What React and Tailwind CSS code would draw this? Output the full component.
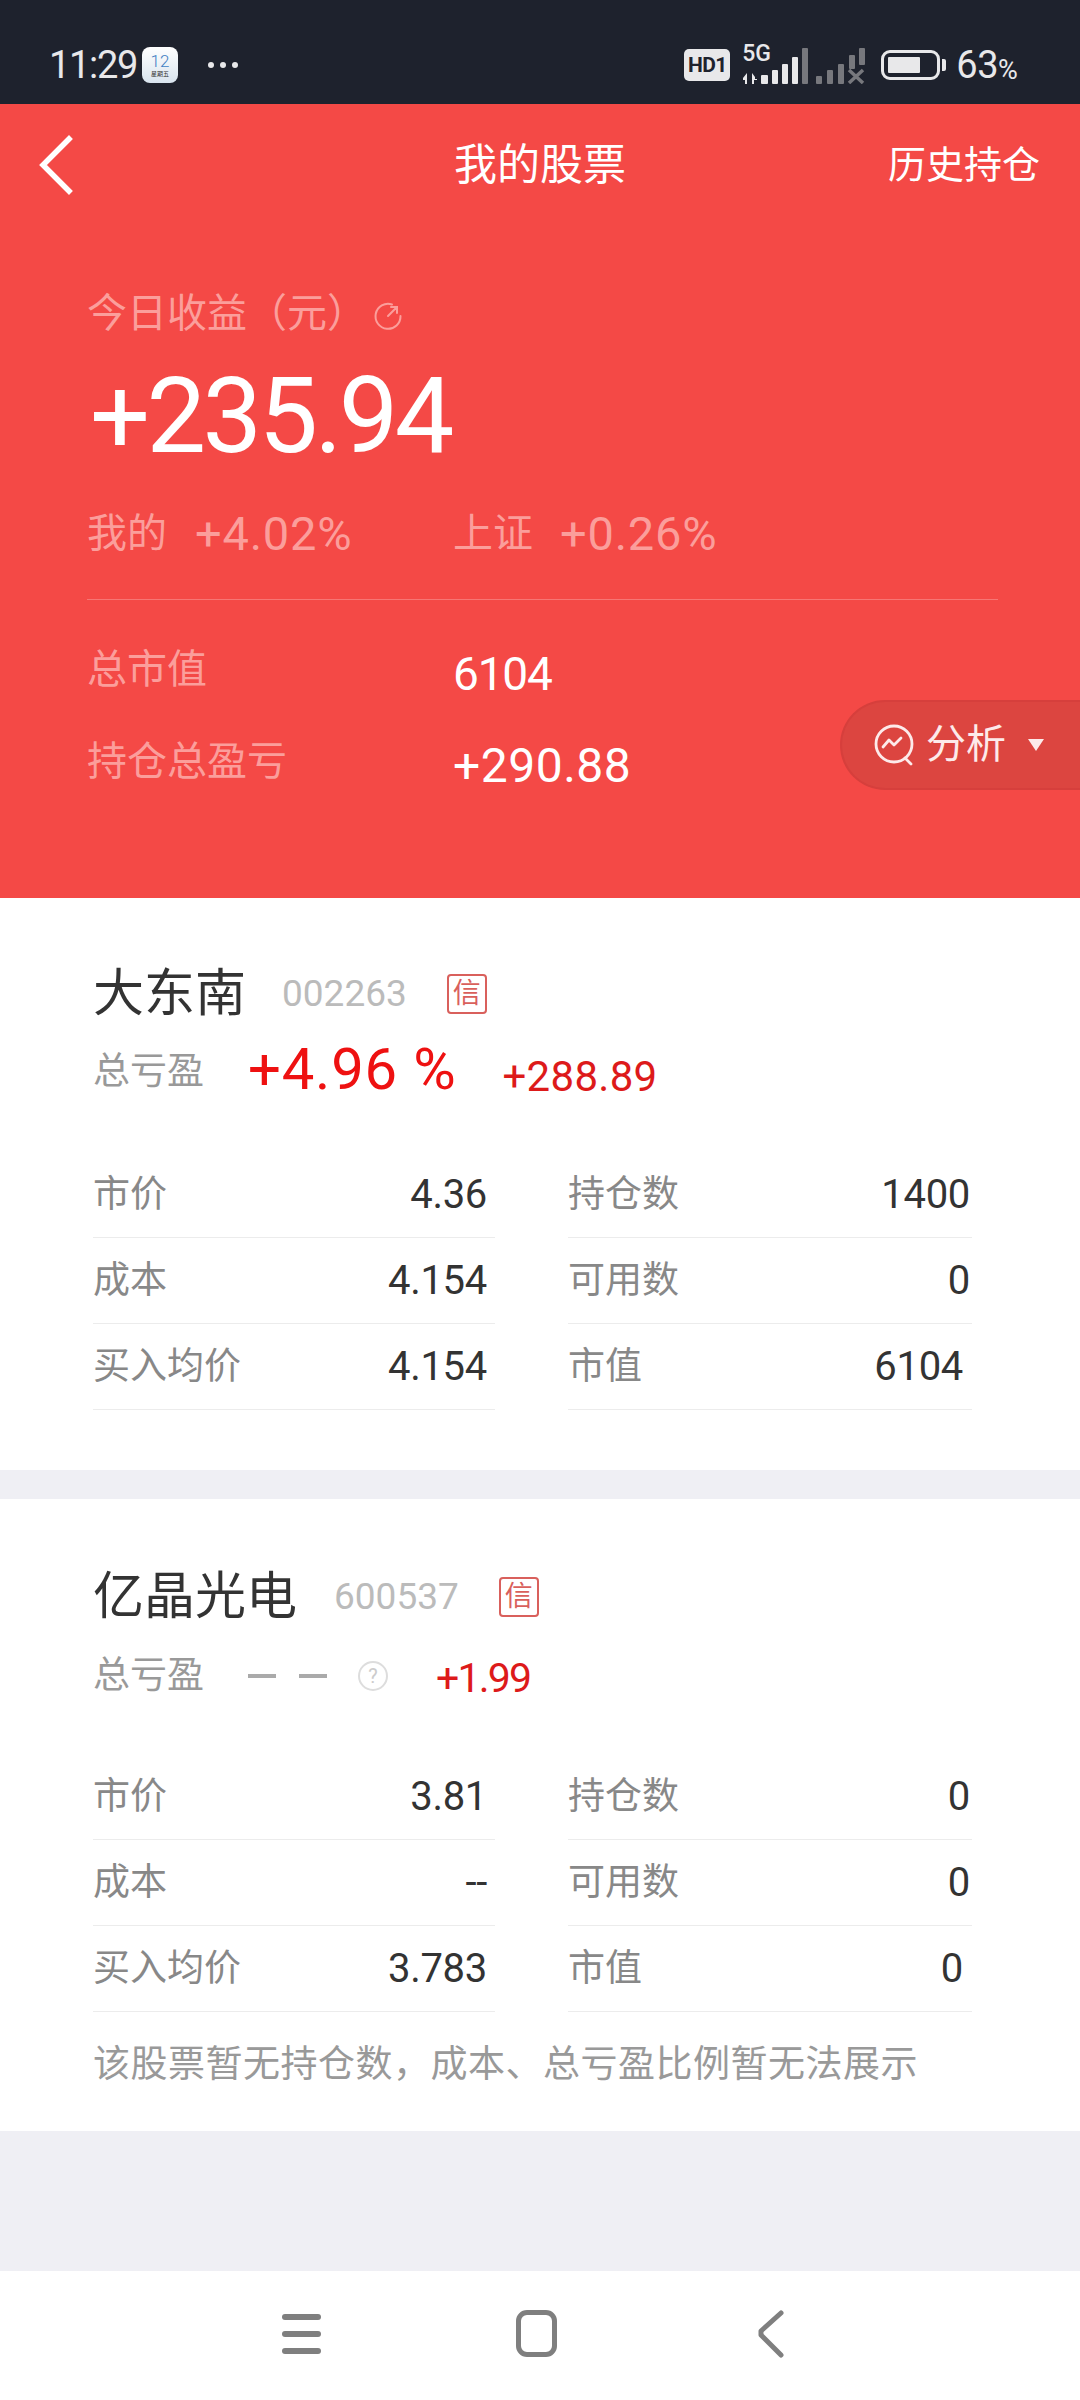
const fontStack = 'font-["Roboto","Noto_Sans_CJK_SC",sans-serif]';

const stocks = [
  {
    name: '大东南',
    code: '002263',
    rows: [
      ['市价', '4.36', '持仓数', '1400'],
      ['成本', '4.154', '可用数', '0'],
      ['买入均价', '4.154', '市值', '6104'],
    ],
  },
  {
    name: '亿晶光电',
    code: '600537',
    rows: [
      ['市价', '3.81', '持仓数', '0'],
      ['成本', '--', '可用数', '0'],
      ['买入均价', '3.783', '市值', '0'],
    ],
  },
];

function SignalBars() {
  return (
    <svg width="124" height="36" viewBox="0 0 124 36" className="shrink-0">
      <g fill="#e8e8ea">
        <path d="M1 30l4-5v11H3v-4H1zM10 36V25l3 4v2h2v1h-3v4z" />
        <rect x="19" y="27" width="7" height="9" rx="1" />
        <rect x="30" y="22" width="6" height="14" rx="1" />
        <rect x="40" y="16" width="6" height="20" rx="1" />
        <rect x="50" y="9" width="6" height="27" rx="1" />
      </g>
      <g fill="#77787d">
        <rect x="60" y="0" width="6" height="36" rx="1" />
        <rect x="74" y="28" width="6" height="8" rx="1" />
        <rect x="85" y="22" width="6" height="14" rx="1" />
        <rect x="96" y="16" width="6" height="20" rx="1" />
        <rect x="107" y="7" width="6" height="14" rx="1" />
        <rect x="117" y="0" width="6" height="17" rx="1" />
      </g>
      <path d="M107 22l14 13M121 22l-14 13" stroke="#77787d" strokeWidth="3.5" fill="none" />
    </svg>
  );
}

function StatusBar() {
  return (
    <div className="h-[104px] bg-[#1e222d] flex items-center pt-[26px] pl-[49px] pr-[60px] text-[#e8e8ea]">
      <span className="text-[38px] leading-[40px] tracking-[-1.3px] w-[93px]">11:29</span>
      <div className="w-[36px] h-[36px] rounded-[8px] bg-gradient-to-b from-white to-[#d9e4ee] flex flex-col items-center justify-center">
        <span className="text-[17px] leading-[17px] text-[#3f7fc4] font-light">12</span>
        <span className="text-[6px] leading-[8px] text-[#333]">星期五</span>
      </div>
      <div className="flex gap-[6px] ml-[30px]">
        <div className="w-[6px] h-[6px] rounded-full bg-[#e8e8ea]" />
        <div className="w-[6px] h-[6px] rounded-full bg-[#e8e8ea]" />
        <div className="w-[6px] h-[6px] rounded-full bg-[#e8e8ea]" />
      </div>
      <div className="ml-auto flex items-center">
        <div className="w-[46px] h-[32px] rounded-[5px] bg-[#e8e8ea] text-[#1e222d] text-[21px] leading-[32px] font-bold text-center tracking-[-0.6px]">HD1</div>
        <div className="relative ml-[12px] w-[124px] h-[34px]">
          <span className="absolute left-0 top-[-5px] text-[23px] leading-[22px] font-medium">5G</span>
          <div className="absolute left-0 top-0"><SignalBars /></div>
        </div>
        <div className="ml-[15px] w-[59px] h-[30px] rounded-[9px] border-[3px] border-[#e8e8ea] p-[4px]">
          <div className="h-full w-[32px] bg-[#e8e8ea] rounded-[1px]" />
        </div>
        <div className="ml-[2px] w-[4px] h-[12px] rounded-r-[2px] bg-[#e8e8ea]" />
        <span className="ml-[10px] text-[38px] leading-[40px] tracking-[-0.5px]">63</span>
        <span className="w-[22px] text-[27px] leading-[20px] mt-[10px]">%</span>
      </div>
    </div>
  );
}

function AnalysisPill() {
  return (
    <div className="absolute right-0 top-[596px] w-[240px] h-[90px] rounded-l-[45px] bg-[#dc4540] border-[2px] border-r-0 border-[#d63f3c] flex items-center pl-[33px] text-[#fdeaea]">
      <svg width="42" height="42" viewBox="0 0 42 42" fill="none" stroke="#fdeaea" strokeWidth="2.8" strokeLinecap="round" strokeLinejoin="round" className="ml-[-1px]">
        <circle cx="20" cy="20" r="18" />
        <path d="M31 34l6 6" />
        <path d="M9 23l6-7 5 5 7-7" />
      </svg>
      <span className="ml-[10px] text-[40px] leading-[44px]">分析</span>
      <svg width="18" height="14" viewBox="0 0 18 14" className="ml-[21px]">
        <path d="M1 1h16L9 13z" fill="#fdeaea" />
      </svg>
    </div>
  );
}

function Hero() {
  return (
    <div className="relative bg-[#f44946] h-[794px]">
      <div className="h-[122px] grid grid-cols-[1fr_auto_1fr] items-center text-white">
        <svg width="40" height="60" viewBox="0 0 40 60" fill="none" stroke="white" strokeWidth="5.5" className="ml-[36px]">
          <path d="M33 4L7 30l26 26" strokeLinecap="square" />
        </svg>
        <span className="text-[43px] leading-[50px]">我的股票</span>
        <span className="text-[38px] leading-[50px] justify-self-end pr-[40px]">历史持仓</span>
      </div>

      <div className="pl-[87px] pr-[82px]">
        <div className="mt-[63px] h-[50px] flex items-center text-[#fb9e9b] text-[40px] leading-[50px]">
          <span>今日收益（元）</span>
          <svg width="30" height="30" viewBox="0 0 30 30" fill="none" stroke="#fb9e9b" strokeWidth="2" className="ml-[6px] mt-[3px]">
            <path d="M19 3.500A12.500 12.500 0 1 0 27.500 15" strokeLinecap="round" />
            <path d="M15 15l8-8M18 6h6v6" strokeLinecap="round" />
          </svg>
        </div>
        <div className="mt-[17px] h-[120px] pl-[3px] text-white text-[106px] leading-[120px] tracking-[-3.6px]">+235.94</div>
        <div className="mt-[33px] h-[50px] flex items-center text-[#fb9e9b] text-[40px] leading-[50px]">
          <span className="w-[108px]">我的</span>
          <span className="w-[258px] text-[47px] tracking-[0.8px]">+4.02%</span>
          <span className="w-[107px]">上证</span>
          <span className="text-[47px] tracking-[0.8px]">+0.26%</span>
        </div>
        <div className="mt-[40px] h-px bg-white/25" />
        <div className="mt-[43px] h-[60px] flex items-center">
          <span className="w-[366px] text-[#fb9e9b] text-[40px] mt-[-6px]">总市值</span>
          <span className="text-white text-[46px] tracking-[-1.2px] mt-[2px]">6104</span>
        </div>
        <div className="mt-[32px] h-[60px] flex items-center">
          <span className="w-[366px] text-[#fb9e9b] text-[40px] mt-[-6px]">持仓总盈亏</span>
          <span className="text-white text-[48px] tracking-[0.5px] mt-[2px]">+290.88</span>
        </div>
      </div>

      <AnalysisPill />
    </div>
  );
}

function CreditBadge({ className }) {
  return (
    <div className={`w-[40px] h-[40px] rounded-[4px] border-[2px] border-[#d9605c] text-[#d9605c] text-[28px] leading-[36px] text-center ${className}`}>信</div>
  );
}

function StockRows({ rows }) {
  return (
    <div className="grid grid-cols-[402px_404px] gap-x-[73px]">
      {rows.map((row, i) => [
        <div key={`l${i}`} className="h-[86px] flex items-center justify-between border-b border-[#ececec] pr-[8px]">
          <span className="text-[37px] text-[#888]">{row[0]}</span>
          <span className="text-[40px] tracking-[-0.3px] text-[#333]">{row[1]}</span>
        </div>,
        <div key={`r${i}`} className={`h-[86px] flex items-center justify-between border-b border-[#ececec] ${i === 2 ? 'pr-[9px]' : 'pr-[2px]'}`}>
          <span className="text-[37px] text-[#888]">{row[2]}</span>
          <span className="text-[40px] tracking-[-0.3px] text-[#333]">{row[3]}</span>
        </div>,
      ])}
    </div>
  );
}

export default function App() {
  return (
    <div className={`${fontStack} w-[1080px] h-[2400px] bg-[#efeff4] flex flex-col`}>
      <StatusBar />
      <Hero />

      <div className="bg-white pl-[93px] pt-[66px] pb-[60px]">
        <div className="h-[60px] flex items-center">
          <span className="text-[51px] text-[#333] leading-[60px]">{stocks[0].name}</span>
          <span className="ml-[36px] text-[37px] text-[#bbb]">{stocks[0].code}</span>
          <CreditBadge className="ml-[40px]" />
        </div>
        <div className="mt-[18px] h-[60px] flex items-center">
          <span className="w-[155px] text-[37px] text-[#999]">总亏盈</span>
          <span className="text-[58px] text-[#ee1111] tracking-[0.8px] mt-[-6px]">+4.96 %</span>
          <span className="ml-[46px] text-[42px] text-[#dd1a1a] tracking-[0.3px] mt-[9px]">+288.89</span>
        </div>
        <div className="mt-[50px]">
          <StockRows rows={stocks[0].rows} />
        </div>
      </div>

      <div className="mt-[29px] bg-white pl-[93px] pt-[68px] pb-[36px]">
        <div className="h-[60px] flex items-center">
          <span className="text-[51px] text-[#333] leading-[60px]">{stocks[1].name}</span>
          <span className="ml-[37px] text-[37px] text-[#bbb]">{stocks[1].code}</span>
          <CreditBadge className="ml-[40px]" />
        </div>
        <div className="mt-[19px] h-[60px] flex items-center">
          <span className="w-[155px] text-[37px] text-[#999]">总亏盈</span>
          <div className="w-[28px] h-[4px] bg-[#aaa]" />
          <div className="ml-[23px] w-[28px] h-[4px] bg-[#aaa]" />
          <div className="ml-[31px] w-[30px] h-[30px] rounded-full border-[2px] border-[#ddd] text-[#ccc] text-[20px] leading-[26px] text-center">?</div>
          <span className="ml-[48px] text-[41px] text-[#dd1a1a] tracking-[-1.8px] mt-[6px]">+1.99</span>
        </div>
        <div className="mt-[48px]">
          <StockRows rows={stocks[1].rows} />
        </div>
        <div className="mt-[23px] h-[60px] flex items-center text-[37px] tracking-[0.5px] text-[#999]">该股票暂无持仓数，成本、总亏盈比例暂无法展示</div>
      </div>

      <div className="mt-auto h-[129px] bg-white flex items-center pb-[4px]">
        <div className="ml-[282px] w-[39px] flex flex-col gap-[11px]">
          <div className="h-[6px] rounded-full bg-[#7f7f7f]" />
          <div className="h-[6px] rounded-full bg-[#7f7f7f]" />
          <div className="h-[6px] rounded-full bg-[#7f7f7f]" />
        </div>
        <div className="ml-[195px] w-[41px] h-[47px] rounded-[11px] border-[5px] border-[#7f7f7f]" />
        <svg width="26" height="48" viewBox="0 0 26 48" fill="none" stroke="#7f7f7f" strokeWidth="5" strokeLinecap="round" strokeLinejoin="round" className="ml-[201px]">
          <path d="M23 3L3 21v4l20 20" />
        </svg>
      </div>
    </div>
  );
}
